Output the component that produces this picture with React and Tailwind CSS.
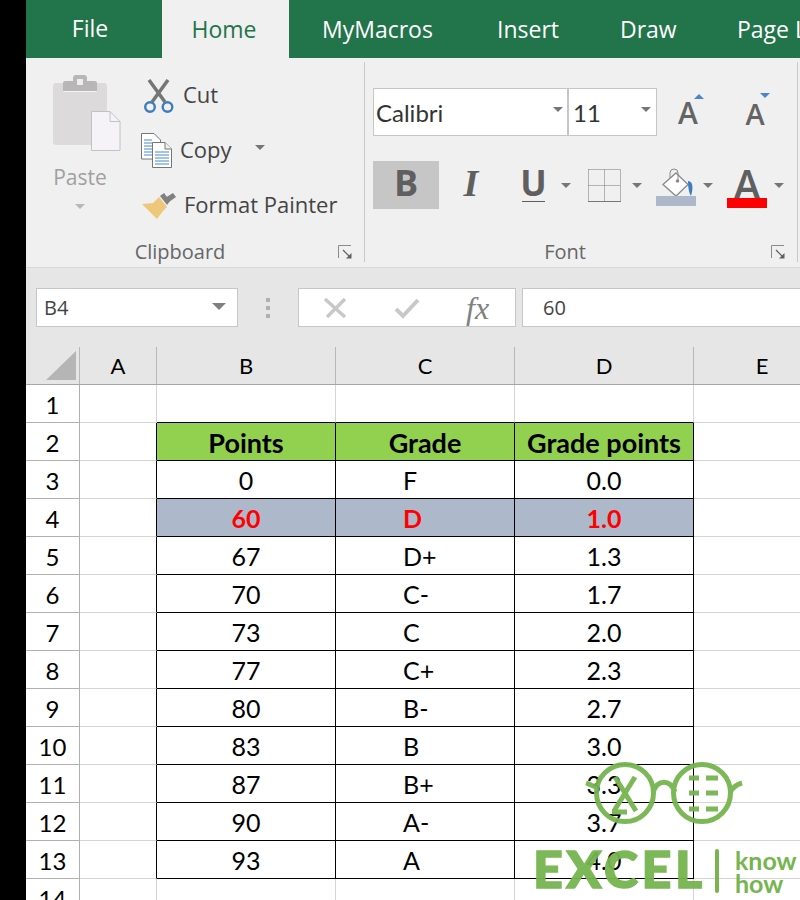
import React from 'react';

const rows = [
  ['0', 'F', '0.0'],
  ['60', 'D', '1.0'],
  ['67', 'D+', '1.3'],
  ['70', 'C-', '1.7'],
  ['73', 'C', '2.0'],
  ['77', 'C+', '2.3'],
  ['80', 'B-', '2.7'],
  ['83', 'B', '3.0'],
  ['87', 'B+', '3.3'],
  ['90', 'A-', '3.7'],
  ['93', 'A', '4.0'],
];

const Caret = ({ className = '', w = 10, h = 5, color = '#767676' }) => (
  <svg width={w} height={h} viewBox="0 0 10 5" preserveAspectRatio="none" className={className}>
    <path d="M0 0H10L5 5Z" fill={color} />
  </svg>
);

const Launcher = ({ className = '' }) => (
  <svg width="14" height="14" viewBox="0 0 14 14" className={className}>
    <path d="M13 .5H.5V13" fill="none" stroke="#8a8a8a" />
    <path d="M5 5L12 12" stroke="#606060" strokeWidth="1.2" />
    <path d="M13.5 8V13.5H8Z" fill="#606060" />
  </svg>
);

const PasteIcon = () => (
  <svg width="68" height="76" viewBox="0 0 68 76">
    <rect x="0" y="8" width="54" height="62" rx="3" fill="#dddadc" />
    <path d="M10 8a2 2 0 0 1 2-2h8V3a3 3 0 0 1 3-3h8a3 3 0 0 1 3 3v3h8a2 2 0 0 1 2 2v8H10Z" fill="#b9b6b8" />
    <rect x="24" y="4" width="6" height="6" fill="#eeeeee" />
    <path d="M10.500 16.500H43.500" stroke="#f4f4f4" />
    <path d="M38.500 36.500H57L67 46.500V75.500H38.500Z" fill="#f5f3f7" stroke="#c2c2c2" />
    <path d="M57 36.500V46.500H67" fill="none" stroke="#c2c2c2" />
  </svg>
);

const ScissorsIcon = () => (
  <svg width="32" height="34" viewBox="0 0 32 34">
    <path d="M6 1L22 23M25 1L9 23" stroke="#757575" strokeWidth="3.500" />
    <circle cx="7" cy="28" r="4.800" fill="#f0f0f0" stroke="#3f7cbf" strokeWidth="2.400" />
    <circle cx="24.500" cy="28" r="4.800" fill="#f0f0f0" stroke="#3f7cbf" strokeWidth="2.400" />
  </svg>
);

const CopyIcon = () => (
  <svg width="31" height="36" viewBox="0 0 31 36">
    <path d="M.5.500H13L19.500 7V26H.5Z" fill="#fff" stroke="#777" />
    <path d="M3 7H11M3 10H17M3 13H17M3 16H17M3 19H17M3 22H17" stroke="#4a86c8" />
    <path d="M11.500 9.500H24L30.500 16V34.500H11.500Z" fill="#fff" stroke="#777" />
    <path d="M24 9.500V16H30.500" fill="#f0f0f0" stroke="#777" />
    <path d="M14 19H28M14 22H28M14 25H28M14 28H28M14 31H28" stroke="#4a86c8" />
  </svg>
);

const BrushIcon = () => (
  <svg width="34" height="28" viewBox="0 0 34 28">
    <path d="M0 12L11 11L17 5L25 15L21 19L15 27Z" fill="#eec77a" />
    <path d="M18 4L22 1L28 9L25 13Z" fill="#808080" />
    <path d="M23 6L31 1L34 5L27 10Z" fill="#808080" />
  </svg>
);

const BordersIcon = ({ className = '' }) => (
  <svg width="33" height="33" viewBox="0 0 33 33" className={className}>
    <g fill="none" stroke="#777" strokeDasharray="1 1">
      <path d="M.5 .5H32.500M.5 16.500H32.500M.5 .5V32M32.500 .5V32M16.500 .5V32" />
    </g>
    <path d="M0 32.500H33" stroke="#777" />
  </svg>
);

const BucketIcon = () => (
  <svg width="40" height="38" viewBox="0 0 40 38">
    <path d="M20 5L32 16.500L20 28L7 16.500Z" fill="#fff" stroke="#8a8a8a" strokeWidth="1.300" />
    <path d="M14 10V5a4 4 0 0 1 8 0V13" fill="none" stroke="#8a8a8a" />
    <circle cx="21.500" cy="13" r="1.800" fill="#8a8a8a" />
    <path d="M32 13C36 13 38 18 35 28C33 25 32 20 32 13Z" fill="#3f7cbf" />
    <rect x="0" y="28" width="40" height="10" fill="#adb9ca" />
  </svg>
);

const XIcon = () => (
  <svg width="24" height="22" viewBox="0 0 24 22">
    <path d="M2 2L22 20M22 2L4 20" stroke="#c8c8c8" strokeWidth="3.500" />
  </svg>
);

const CheckIcon = () => (
  <svg width="26" height="22" viewBox="0 0 26 22">
    <path d="M2 12L9 19L24 3" fill="none" stroke="#c8c8c8" strokeWidth="4" />
  </svg>
);

const Logo = () => (
  <div className="absolute left-[534px] top-[762px] w-[266px] h-[138px] text-[#76b54f] font-['Lato',sans-serif] pointer-events-none">
    <svg width="266" height="74" viewBox="0 0 266 74" className="absolute left-0 top-0 opacity-95">
      <g fill="none" stroke="#76b54f" strokeWidth="5">
        <circle cx="91" cy="31" r="28.500" />
        <circle cx="168" cy="31" r="28.500" />
        <path d="M119 30C124 17 136 17 141 30" />
        <path d="M62 25C58 24 55 22 52 21" />
        <path d="M196 30C200 24 204 22 208 21" />
        <path d="M81 15L102 49M101 15L80 49" />
        <path d="M78 50H93" />
        <path d="M155 16H165M172 16H184M155 31H165M172 31H184M155 47H165M172 47H184" strokeWidth="5" />
      </g>
    </svg>
    <div className="absolute -left-[1px] top-[76px] text-[52px] leading-[60px] font-black tracking-[3.500px] opacity-95 [-webkit-text-stroke:1.500px_#76b54f]">EXCEL</div>
    <div className="absolute left-[181px] top-[87px] w-[4px] h-[44px] rounded-full bg-[#76b54f]" />
    <div className="absolute left-[201px] top-[87px] text-[25px] leading-[23px] font-bold">know<br />how</div>
  </div>
);

export default function App() {
  return (
    <div className="relative w-[800px] h-[900px] overflow-hidden flex bg-black font-['Open_Sans',sans-serif]">
      <div className="w-[26px] shrink-0" />
      <div className="w-[774px] flex flex-col shrink-0 bg-white">
        {/* tabs */}
        <div className="h-[58px] shrink-0 flex bg-[#22744a] text-white text-[23px] leading-[58px] whitespace-nowrap overflow-hidden">
          <div className="w-[136px] shrink-0 text-center pr-[8px] -mt-[1px]">File</div>
          <div className="w-[127px] shrink-0 text-center pr-[3px] bg-[#f0f0f0] text-[#22744a]">Home</div>
          <div className="w-[208px] shrink-0 pl-[33px]">MyMacros</div>
          <div className="w-[123px] shrink-0">Insert</div>
          <div className="w-[117px] shrink-0">Draw</div>
          <div className="shrink-0">Page Layout</div>
        </div>

        {/* ribbon */}
        <div className="h-[210px] shrink-0 flex bg-[#f0f0f0] border-b border-[#d8d8d8] text-[#444444]">
          <div className="w-[338px] shrink-0 relative flex flex-col">
            <div className="h-[178px] flex pl-[27px]">
              <div className="w-[68px] pt-[17px] flex flex-col">
                <PasteIcon />
                <div className="w-[54px] text-center text-[21px] leading-[30px] mt-[11px] text-[#a0a0a0]">Paste</div>
                <Caret className="ml-[22px] mt-[12px]" color="#b8b8b8" />
              </div>
              <div className="ml-[22px] pt-[10px] flex flex-col text-[22px]">
                <div className="h-[55px] flex items-center">
                  <ScissorsIcon />
                  <span className="ml-[8px] -mt-[3px]">Cut</span>
                </div>
                <div className="h-[55px] flex items-center -ml-[2px]">
                  <CopyIcon />
                  <span className="ml-[8px] -mt-[3px]">Copy</span>
                  <Caret className="ml-[23px] -mt-[6px]" />
                </div>
                <div className="h-[55px] flex items-center -ml-[1px]">
                  <BrushIcon />
                  <span className="ml-[8px] -mt-[3px]">Format Painter</span>
                </div>
              </div>
            </div>
            <div className="flex-1 text-center text-[20px] leading-[31px] text-[#666666] pr-[30px]">Clipboard</div>
            <Launcher className="absolute left-[312px] top-[187px]" />
          </div>
          <div className="w-px my-[4px] h-[200px] bg-[#c8c8c8]" />

          <div className="w-[432px] shrink-0 relative flex flex-col">
            <div className="h-[178px] pl-[8px] pt-[30px]">
              <div className="h-[48px] flex items-center">
                <div className="w-[195px] h-full bg-white border border-[#c6c6c6] flex items-center justify-between pl-[2px] pr-[4px] text-[24px] font-['Lato',sans-serif] text-[#333333]">
                  <span className="mt-[1px]">Calibri</span>
                  <Caret className="-mt-[6px]" />
                </div>
                <div className="w-[89px] h-full bg-white border border-[#c6c6c6] flex items-center justify-between pl-[4px] pr-[5px] text-[24px] font-['Lato',sans-serif] text-[#333333]">
                  <span className="mt-[1px]">11</span>
                  <Caret className="-mt-[6px]" />
                </div>
                <div className="relative w-[62px] text-center text-[30px] leading-[48px] font-semibold text-[#646464] pt-[2px]">
                  A
                  <Caret className="absolute left-[37px] top-[7px] rotate-180" color="#4a86c8" />
                </div>
                <div className="relative w-[72px] text-center text-[29px] leading-[48px] font-semibold text-[#646464] pt-[4px]">
                  A
                  <Caret className="absolute left-[41px] top-[7px]" color="#4a86c8" />
                </div>
              </div>
              <div className="h-[48px] mt-[25px] flex items-center text-[#5f5f5f]">
                <div className="w-[66px] h-full bg-[#c6c6c6] text-center text-[36px] leading-[44px] font-bold">B</div>
                <div className="w-[64px] text-center text-[38px] leading-[44px] font-bold italic font-['Liberation_Serif',serif] -mt-[4px]">I</div>
                <div className="w-[60px] flex flex-col items-center -mt-[2px] pl-[1px]">
                  <span className="text-[35px] leading-[34px] font-bold">U</span>
                  <span className="w-[23px] h-[1.500px] bg-[#5f5f5f] mt-[1px]" />
                </div>
                <Caret className="-ml-[2px]" />
                <BordersIcon className="ml-[17px]" />
                <Caret className="ml-[11px]" />
                <div className="ml-[14px] mt-[4px]"><BucketIcon /></div>
                <Caret className="ml-[7px]" />
                <div className="ml-[14px] w-[40px] mt-[6px] flex flex-col items-center">
                  <span className="text-[41px] leading-[30px] font-semibold">A</span>
                  <span className="w-[40px] h-[10px] bg-[#ff0000] -mt-[1px]" />
                </div>
                <Caret className="ml-[7px]" />
              </div>
            </div>
            <div className="flex-1 text-center text-[20px] leading-[31px] text-[#666666] pr-[32px]">Font</div>
            <Launcher className="absolute left-[406px] top-[187px]" />
          </div>
          <div className="w-px my-[4px] h-[200px] bg-[#c8c8c8]" />
        </div>

        {/* formula bar */}
        <div className="h-[79px] shrink-0 bg-[#e6e6e6] pt-[20px] pl-[10px] flex items-start">
          <div className="w-[202px] h-[39px] bg-white border border-[#c6c6c6] flex items-center justify-between pl-[7px] pr-[11px] text-[20px] text-[#444444]">
            B4
            <Caret w={14} h={7} color="#808080" className="-mt-[3px]" />
          </div>
          <div className="w-[60px] h-[39px] flex flex-col items-center justify-center gap-[4px]">
            <span className="w-[4px] h-[4px] bg-[#b0b0b0]" />
            <span className="w-[4px] h-[4px] bg-[#b0b0b0]" />
            <span className="w-[4px] h-[4px] bg-[#b0b0b0]" />
          </div>
          <div className="w-[218px] h-[39px] bg-white border border-[#c6c6c6] flex items-center pl-[24px]">
            <XIcon />
            <span className="ml-[47px]"><CheckIcon /></span>
            <span className="ml-[46px] text-[32px] italic font-['Liberation_Serif',serif] text-[#808080]">fx</span>
          </div>
          <div className="ml-[6px] flex-1 h-[39px] bg-white border border-r-0 border-[#c6c6c6] pl-[20px] text-[20px] leading-[37px] text-[#444444]">60</div>
        </div>

        {/* sheet */}
        <div className="flex-1 font-['Lato',sans-serif] text-black">
          <div className="h-[38px] flex bg-[#e6e6e6] border-b border-[#a6a6a6] text-[22px] leading-[37px] text-center">
            <div className="w-[54px] shrink-0 border-r border-[#b8b8b8] relative">
              <span className="absolute left-[20px] top-[4px] w-0 h-0 border-l-[30px] border-l-transparent border-b-[29px] border-b-[#b5b5b5]" />
            </div>
            <div className="w-[77px] shrink-0 border-r border-[#b8b8b8]">A</div>
            <div className="w-[179px] shrink-0 border-r border-[#b8b8b8]">B</div>
            <div className="w-[179px] shrink-0 border-r border-[#b8b8b8]">C</div>
            <div className="w-[179px] shrink-0 border-r border-[#b8b8b8]">D</div>
            <div className="w-[136px] shrink-0">E</div>
          </div>

          <div className="h-[38px] flex text-[25px] leading-[39px]">
            <div className="w-[54px] shrink-0 border-r border-b border-[#b0b0b0] text-center text-[24px]">1</div>
            <div className="w-[77px] shrink-0 border-r border-b border-[#d4d4d4]" />
            <div className="w-[179px] shrink-0 border-r border-[#d4d4d4] border-b border-b-black" />
            <div className="w-[179px] shrink-0 border-r border-[#d4d4d4] border-b border-b-black" />
            <div className="w-[179px] shrink-0 border-r border-[#d4d4d4] border-b border-b-black" />
            <div className="flex-1 border-b border-[#d4d4d4]" />
          </div>

          <div className="h-[38px] flex text-[27px] leading-[39px] font-bold">
            <div className="w-[54px] shrink-0 border-r border-b border-[#b0b0b0] text-center text-[24px] font-normal">2</div>
            <div className="w-[77px] shrink-0 border-r border-r-black border-b border-b-[#d4d4d4]" />
            <div className="w-[179px] shrink-0 border-r border-b border-black bg-[#92d050] text-center">Points</div>
            <div className="w-[179px] shrink-0 border-r border-b border-black bg-[#92d050] text-center">Grade</div>
            <div className="w-[179px] shrink-0 border-r border-b border-black bg-[#92d050] text-center">Grade points</div>
            <div className="flex-1 border-b border-[#d4d4d4]" />
          </div>

          {rows.map((r, i) => {
            const hot = r[0] === '60';
            const fill = hot ? 'bg-[#adb9ca] text-[#ff0000] font-bold' : '';
            return (
              <div key={r[0]} className="h-[38px] flex text-[25px] leading-[39px]">
                <div className="w-[54px] shrink-0 border-r border-b border-[#b0b0b0] text-center text-[24px]">{i + 3}</div>
                <div className="w-[77px] shrink-0 border-r border-r-black border-b border-b-[#d4d4d4]" />
                <div className={`w-[179px] shrink-0 border-r border-b border-black text-center ${fill}`}>{r[0]}</div>
                <div className={`w-[179px] shrink-0 border-r border-b border-black pl-[67px] ${fill}`}>{r[1]}</div>
                <div className={`w-[179px] shrink-0 border-r border-b border-black text-center ${fill}`}>{r[2]}</div>
                <div className="flex-1 border-b border-[#d4d4d4]" />
              </div>
            );
          })}

          <div className="h-[38px] flex text-[25px] leading-[39px]">
            <div className="w-[54px] shrink-0 border-r border-[#b0b0b0] text-center text-[24px]">14</div>
            <div className="w-[77px] shrink-0 border-r border-[#d4d4d4]" />
            <div className="w-[179px] shrink-0 border-r border-[#d4d4d4]" />
            <div className="w-[179px] shrink-0 border-r border-[#d4d4d4]" />
            <div className="w-[179px] shrink-0 border-r border-[#d4d4d4]" />
          </div>
        </div>
      </div>
      <Logo />
    </div>
  );
}
